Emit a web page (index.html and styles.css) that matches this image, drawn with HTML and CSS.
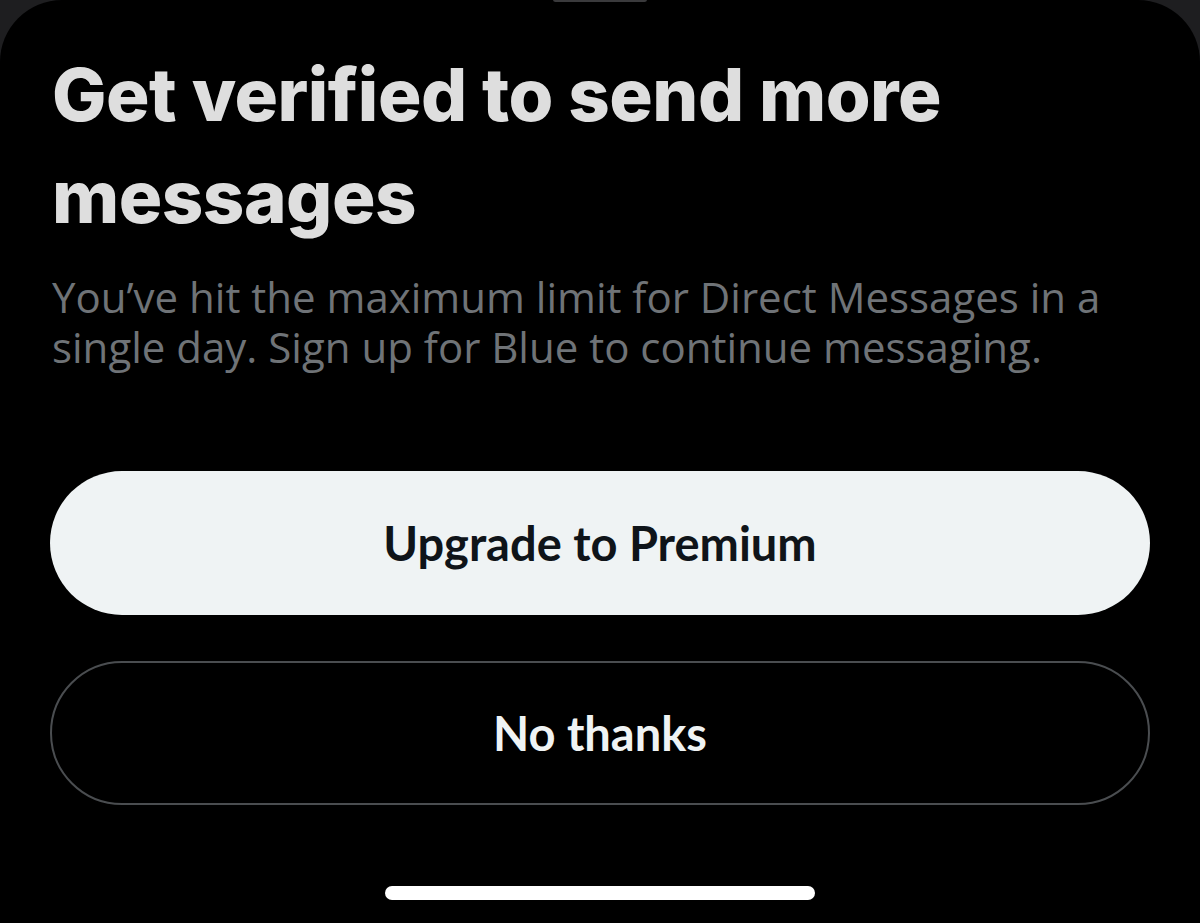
FILE: index.html
```html
<!DOCTYPE html>
<html lang="en">
<head>
<meta charset="utf-8">
<title>Get verified</title>
<link rel="stylesheet" href="styles.css">
</head>
<body>
<div class="screen">
  <div class="sheet">
    <div class="grabber"></div>
    <div class="content">
      <h1 class="title">Get verified to send more messages</h1>
      <p class="desc">You’ve hit the maximum limit for Direct Messages in a single day. Sign up for Blue to continue messaging.</p>
      <div class="actions">
        <button class="btn btn-primary">Upgrade to Premium</button>
        <button class="btn btn-secondary">No thanks</button>
      </div>
    </div>
    <div class="home-indicator"></div>
  </div>
</div>
</body>
</html>
```
FILE: styles.css
```css
html, body {
  margin: 0;
  padding: 0;
  background: #1e1e20;
}
.screen {
  width: 1200px;
  height: 923px;
  overflow: hidden;
  background: #1e1e20;
}
.sheet {
  position: relative;
  width: 1200px;
  height: 923px;
  background: #000;
  border-radius: 62px 62px 0 0;
  box-sizing: border-box;
  display: flex;
  flex-direction: column;
}
.grabber {
  position: absolute;
  top: -3px;
  left: 553px;
  width: 94px;
  height: 5px;
  border-radius: 3px;
  background: #3a3a3c;
}
.content {
  padding: 44px 50px 0 52px;
  display: flex;
  flex-direction: column;
}
.title {
  margin: 0;
  font-family: "Inter", "Liberation Sans", sans-serif;
  font-weight: 800;
  font-size: 72.5px;
  line-height: 102px;
  letter-spacing: -0.5px;
  color: #dedede;
}
.desc {
  margin: 24px 0 0 0;
  font-family: "Open Sans", "Liberation Sans", sans-serif;
  font-weight: 400;
  font-size: 42px;
  line-height: 50px;
  color: #6f7377;
  max-width: 1098px;
}
.actions {
  margin-top: 99px;
  display: flex;
  flex-direction: column;
  gap: 46px;
}
.btn {
  width: 1100px;
  height: 144px;
  border-radius: 72px;
  font-family: "Lato", "Inter", sans-serif;
  font-weight: 700;
  font-size: 47px;
  cursor: pointer;
  margin-left: -2px;
}
.btn-primary {
  background: #eff3f4;
  color: #0f1419;
  border: none;
}
.btn-secondary {
  background: #000;
  color: #eff3f4;
  border: 2px solid #4a4d50;
}
.home-indicator {
  position: absolute;
  left: 385px;
  top: 886px;
  width: 430px;
  height: 14px;
  border-radius: 7px;
  background: #fff;
}
```
